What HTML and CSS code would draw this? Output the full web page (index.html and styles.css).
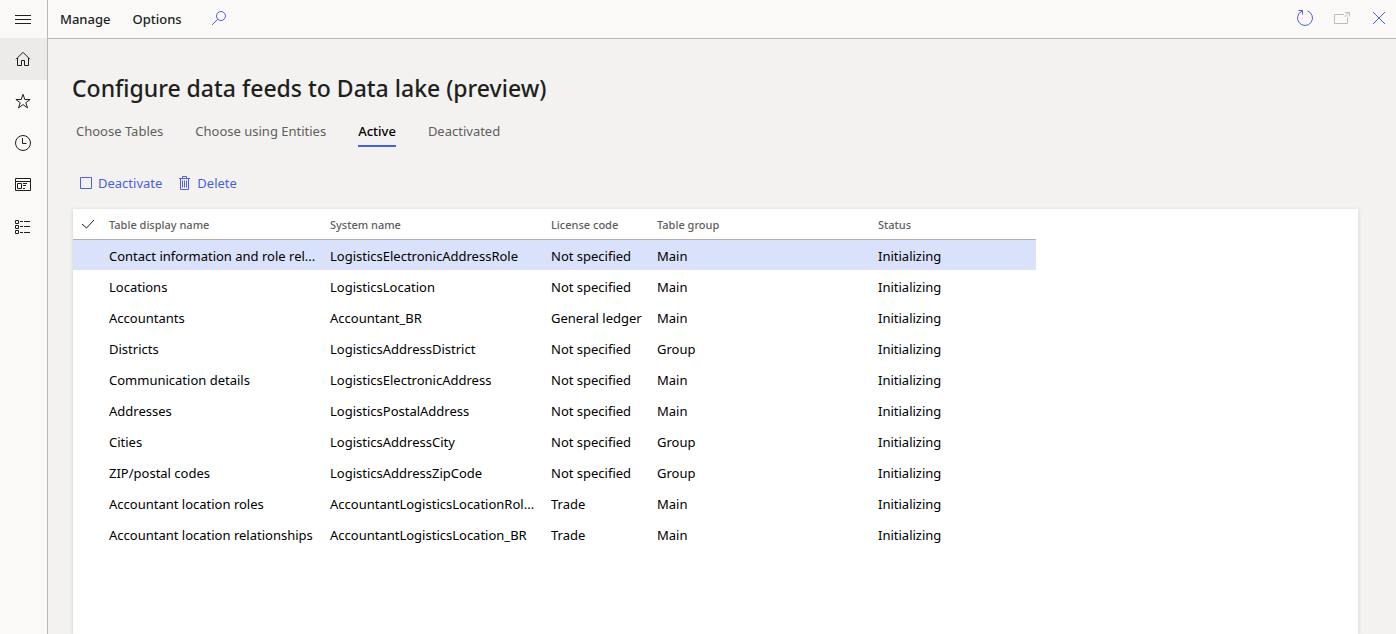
FILE: index.html
```html
<!DOCTYPE html>
<html lang="en">
<head>
<meta charset="utf-8">
<title>Configure data feeds to Data lake (preview)</title>
<link rel="stylesheet" href="styles.css">
</head>
<body>
<div class="app">
  <nav class="rail" aria-label="Main">
    <button class="rail-item rail-menu" aria-label="Expand the navigation pane">
      <svg class="icon" width="18" height="18" viewBox="0 0 18 18"><path d="M1 5.500h16M1 9.500h16M1 13.500h16"/></svg>
    </button>
    <button class="rail-item rail-current" aria-label="Home">
      <svg class="icon" width="18" height="18" viewBox="0 0 18 18"><path d="M2 9.300L9 2.300l7 7M3.500 8v7.500h4v-5h3v5h4V8"/></svg>
    </button>
    <button class="rail-item" aria-label="Favorites">
      <svg class="icon" width="18" height="18" viewBox="0 0 18 18"><path d="M9 2.300l1.800 5.200h5.300l-4.300 3.200 1.700 5.200L9 12.600l-4.500 3.300 1.700-5.200L1.900 7.500h5.300z"/></svg>
    </button>
    <button class="rail-item" aria-label="Recent">
      <svg class="icon" width="18" height="18" viewBox="0 0 18 18"><circle cx="9" cy="9" r="7.500"/><path d="M8.500 4v5.500h4"/></svg>
    </button>
    <button class="rail-item" aria-label="Workspaces">
      <svg class="icon" width="18" height="18" viewBox="0 0 18 18"><path d="M1.500 2.500h15v12h-15zM1.500 5.500h15M3.500 7.500h4v5h-4zM9 7.500h4M9 9.500h3M9 12.500h2"/></svg>
    </button>
    <button class="rail-item" aria-label="Modules">
      <svg class="icon" width="18" height="18" viewBox="0 0 18 18"><path d="M1.500 2.500h3v3h-3zM1.500 7.500h3v3h-3zM1.500 12.500h3v3h-3zM6 3.500h3M10 3.500h6M6 8.500h3M10 8.500h6M6 14.500h3M10 14.500h6"/></svg>
    </button>
  </nav>
  <div class="workarea">
    <header class="topbar">
      <button class="topbar-action">Manage</button>
      <button class="topbar-action">Options</button>
      <button class="icon-button" aria-label="Search">
        <svg class="icon accent" width="16" height="16" viewBox="0 0 16 16"><circle cx="10" cy="6" r="4.500"/><path d="M6.800 9.200L1 15"/></svg>
      </button>
      <div class="topbar-end">
        <button class="icon-button" aria-label="Refresh">
          <svg class="icon accent" width="18" height="18" viewBox="0 0 18 18"><path d="M11.500 1.900a7.500 7.500 0 1 1-5.500.2M2.500 1.500H6.500v4"/></svg>
        </button>
        <button class="icon-button" aria-label="Open in new window" disabled>
          <svg class="icon muted" width="18" height="18" viewBox="0 0 18 18"><path d="M11 5.500H1.500v9h13V8M11.500 8l4.500-4.500M12 3.500h4.500v4"/></svg>
        </button>
        <button class="icon-button" aria-label="Close">
          <svg class="icon accent" width="18" height="18" viewBox="0 0 18 18"><path d="M3 3l12 12M15 3L3 15"/></svg>
        </button>
      </div>
    </header>
    <main class="content">
      <h1 class="title">Configure data feeds to Data lake (preview)</h1>
      <div class="tabs" role="tablist">
        <button class="tab" role="tab" aria-selected="false">Choose Tables</button>
        <button class="tab" role="tab" aria-selected="false">Choose using Entities</button>
        <button class="tab tab-active" role="tab" aria-selected="true">Active</button>
        <button class="tab" role="tab" aria-selected="false">Deactivated</button>
      </div>
      <div class="toolbar">
        <button class="command">
          <svg class="icon accent" width="14" height="14" viewBox="0 0 14 14"><path d="M1.500 1.500h11v11h-11z"/></svg>
          Deactivate
        </button>
        <button class="command">
          <svg class="icon accent" width="14" height="16" viewBox="0 0 14 16"><path d="M1 3.500h11M4.500 3.500v-2h4v2M2.500 3.500v11h8v-11M4.500 5.500v7M6.500 5.500v7M8.500 5.500v7"/></svg>
          Delete
        </button>
      </div>
      <section class="panel">
        <table class="grid">
          <colgroup><col class="col-check"><col class="col-wide"><col class="col-wide"><col class="col-license"><col class="col-wide"><col class="col-status"></colgroup>
          <thead>
            <tr>
              <th class="check"><button class="icon-button" aria-label="Select all rows"><svg class="icon" width="14" height="12" viewBox="0 0 14 12"><path d="M1 7l4.500 4L13 3"/></svg></button></th>
              <th>Table display name</th><th>System name</th><th>License code</th><th>Table group</th><th>Status</th>
            </tr>
          </thead>
          <tbody>
            <tr class="selected"><td></td><td>Contact information and role rel...</td><td>LogisticsElectronicAddressRole</td><td>Not specified</td><td>Main</td><td>Initializing</td></tr>
            <tr><td></td><td>Locations</td><td>LogisticsLocation</td><td>Not specified</td><td>Main</td><td>Initializing</td></tr>
            <tr><td></td><td>Accountants</td><td>Accountant_BR</td><td>General ledger</td><td>Main</td><td>Initializing</td></tr>
            <tr><td></td><td>Districts</td><td>LogisticsAddressDistrict</td><td>Not specified</td><td>Group</td><td>Initializing</td></tr>
            <tr><td></td><td>Communication details</td><td>LogisticsElectronicAddress</td><td>Not specified</td><td>Main</td><td>Initializing</td></tr>
            <tr><td></td><td>Addresses</td><td>LogisticsPostalAddress</td><td>Not specified</td><td>Main</td><td>Initializing</td></tr>
            <tr><td></td><td>Cities</td><td>LogisticsAddressCity</td><td>Not specified</td><td>Group</td><td>Initializing</td></tr>
            <tr><td></td><td>ZIP/postal codes</td><td>LogisticsAddressZipCode</td><td>Not specified</td><td>Group</td><td>Initializing</td></tr>
            <tr><td></td><td>Accountant location roles</td><td>AccountantLogisticsLocationRol...</td><td>Trade</td><td>Main</td><td>Initializing</td></tr>
            <tr><td></td><td>Accountant location relationships</td><td>AccountantLogisticsLocation_BR</td><td>Trade</td><td>Main</td><td>Initializing</td></tr>
          </tbody>
        </table>
      </section>
    </main>
  </div>
</div>
</body>
</html>
```
FILE: styles.css
```css
* {
  box-sizing: border-box;
}

body {
  margin: 0;
  background: #f3f2f1;
  color: #000;
  font: 13px/20px "Segoe UI", "Noto Sans", "Open Sans", sans-serif;
}

button {
  margin: 0;
  padding: 0;
  border: 0;
  background: none;
  color: inherit;
  font: inherit;
}

.icon {
  display: block;
  fill: none;
  stroke: #201f1e;
  stroke-width: 1;
}

.icon.accent {
  stroke: #4f5fe0;
}

.icon.muted {
  stroke: #bebbb8;
}

.app {
  display: flex;
  min-height: 100vh;
}

.rail {
  flex: none;
  display: flex;
  flex-direction: column;
  width: 48px;
  background: #faf9f8;
  border-right: 1px solid #bab8b7;
}

.rail-item {
  display: flex;
  align-items: center;
  height: 42px;
  padding-left: 14px;
}

.rail-menu {
  height: 38px;
}

.rail-current {
  background: #edebe9;
}

.workarea {
  flex: 1;
  min-width: 0;
  display: flex;
  flex-direction: column;
}

.topbar {
  display: flex;
  align-items: center;
  height: 39px;
  padding: 0 8px 0 12px;
  background: #faf9f8;
  border-bottom: 1px solid #bab8b7;
}

.topbar-action {
  margin-right: 22px;
  color: #201f1e;
  font-weight: 500;
}

.topbar .icon-button {
  margin-left: 7px;
  padding-bottom: 2px;
}

.topbar-end {
  display: flex;
  align-items: center;
  gap: 12px;
  margin-left: auto;
}

.content {
  flex: 1;
  display: flex;
  flex-direction: column;
  padding: 32px 38px 0 24px;
}

.title {
  margin: 0;
  color: #201f1e;
  font-size: 23px;
  line-height: 34px;
  font-weight: 500;
}

.tabs {
  display: flex;
  gap: 32px;
  margin-top: 14px;
  padding-left: 4px;
}

.tab {
  height: 28px;
  padding-bottom: 2px;
  border-bottom: 2px solid transparent;
  color: #605e5c;
}

.tab-active {
  border-bottom-color: #4262e0;
  color: #000;
  font-weight: 500;
}

.toolbar {
  display: flex;
  gap: 16px;
  margin-top: 26px;
  padding-left: 7px;
}

.command {
  display: flex;
  align-items: center;
  gap: 5px;
  color: #4a5fdc;
}

.panel {
  flex: 1;
  margin: 16px 0 0 1px;
  background: #fff;
  box-shadow: 0 1px 4px rgba(0, 0, 0, 0.15);
}

.grid {
  table-layout: fixed;
  width: 963px;
  border-collapse: separate;
  border-spacing: 0;
}

.col-check {
  width: 31px;
}

.col-wide {
  width: 221px;
}

.col-license {
  width: 106px;
}

.col-status {
  width: 163px;
}

.grid th {
  height: 31px;
  padding: 2px 5px 0;
  border-bottom: 1px solid #b3b0ad;
  color: #605e5c;
  font-size: 11px;
  font-weight: 500;
  text-align: left;
}

.grid .check {
  padding-left: 8px;
}

.grid td {
  height: 31px;
  padding: 1px 4px 0 5px;
  border-bottom: 1px solid #fff;
  overflow: hidden;
  text-overflow: ellipsis;
  white-space: nowrap;
}

.selected {
  background: #dae2fb;
}
```
